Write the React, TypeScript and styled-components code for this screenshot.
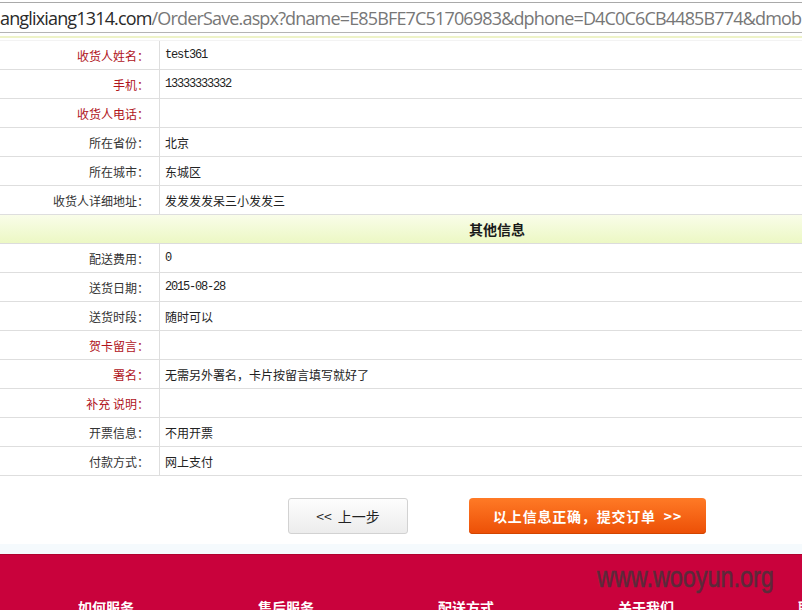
import React from "react";
import styled, { createGlobalStyle } from "styled-components";

const Global = createGlobalStyle`
  html, body { margin: 0; padding: 0; background: #fff; overflow: hidden; }
  body { font-family: "Noto Sans CJK SC", "Noto Sans", sans-serif; }
`;

const Screen = styled.div`
  width: 802px;
  height: 610px;
  overflow: hidden;
  position: relative;
`;

const AddressFrame = styled.div`
  height: 36px;
  box-sizing: border-box;
  border-bottom: 2px solid #eef3c8;
  background: #fff;
`;

const AddressBox = styled.div`
  margin-top: 2px;
  height: 31px;
  box-sizing: border-box;
  border-top: 1px solid #a9a9a9;
  border-bottom: 1px solid #b4b4b4;
  display: flex;
  align-items: center;
  white-space: nowrap;
  overflow: hidden;
  font-family: "Open Sans", "Noto Sans", sans-serif;
  font-size: 18px;
  letter-spacing: -0.84px;
  color: #777;
`;

const Host = styled.span`
  color: #2a2a2a;
`;

const Page = styled.div`
  width: 994px;
  padding-top: 2px;
`;

const Table = styled.div`
  display: grid;
  grid-template-columns: 160px 1fr;
  border-top: 1px solid #f3f3f3;
`;

const Label = styled.div<{ $red?: boolean }>`
  height: 29px;
  box-sizing: border-box;
  border-bottom: 1px solid #dedede;
  border-right: 1px solid #dedede;
  display: flex;
  align-items: center;
  justify-content: flex-end;
  padding-right: 10px;
  font-size: 12px;
  color: ${(p) => (p.$red ? "#b0141c" : "#333")};
`;

const Value = styled.div<{ $mono?: boolean }>`
  height: 29px;
  box-sizing: border-box;
  border-bottom: 1px solid #dedede;
  display: flex;
  align-items: center;
  padding-left: 5px;
  color: #222;
  font-size: 12px;
  font-family: ${(p) =>
    p.$mono
      ? `"Liberation Mono", "DejaVu Sans Mono", monospace`
      : `"Noto Sans CJK SC", sans-serif`};
  letter-spacing: ${(p) => (p.$mono ? "-1.2px" : "0")};
`;

const SectionHead = styled.div`
  grid-column: 1 / -1;
  height: 29px;
  box-sizing: border-box;
  border-bottom: 1px solid #dcdcdc;
  background: linear-gradient(#f9fde9, #ecf8c4);
  display: flex;
  align-items: center;
  justify-content: center;
  font-size: 14px;
  font-weight: 700;
  color: #1a1a1a;
`;

const Actions = styled.div`
  display: flex;
  justify-content: center;
  gap: 61px;
  padding: 22px 0 10px;
`;

const BackButton = styled.button`
  width: 120px;
  height: 36px;
  border: 1px solid #d2d2d2;
  border-radius: 3px;
  background: linear-gradient(#fdfdfd, #ececec);
  font-family: "Noto Sans CJK SC", sans-serif;
  font-size: 14px;
  color: #222;
  padding: 0;
  word-spacing: 3px;
`;

const SubmitButton = styled.button`
  width: 237px;
  height: 36px;
  border: none;
  border-radius: 4px;
  background: linear-gradient(#ff7a26, #ec4f06);
  box-shadow: inset 0 -1px 0 #d24500;
  font-family: "Noto Sans CJK SC", sans-serif;
  font-size: 14px;
  font-weight: 700;
  color: #fff;
  padding: 0;
  letter-spacing: 0.8px;
  word-spacing: 4px;
`;

const Tint = styled.div`
  height: 10px;
  background: #f5fafd;
`;

const Footer = styled.div`
  position: relative;
  height: 120px;
  background: #c9023c;
  border-top: 1px solid #b0022f;
  display: flex;
  padding: 42px 0 0 78px;
  box-sizing: border-box;
`;

const FooterLink = styled.div`
  width: 180px;
  flex: none;
  font-size: 14px;
  font-weight: 700;
  color: #fff;
`;

const Watermark = styled.div`
  position: absolute;
  left: 597px;
  top: 5px;
  font-family: "Liberation Sans", Arial, sans-serif;
  font-size: 30px;
  transform: scaleX(0.78);
  transform-origin: left top;
  color: rgb(92, 42, 58);
  -webkit-text-stroke: 0.6px rgb(92, 42, 58);
`;

type Row = { label: string; value?: string; red?: boolean; mono?: boolean };

const receiver: Row[] = [
  { label: "收货人姓名：", value: "test361", red: true, mono: true },
  { label: "手机：", value: "13333333332", red: true, mono: true },
  { label: "收货人电话：", value: "", red: true },
  { label: "所在省份：", value: "北京" },
  { label: "所在城市：", value: "东城区" },
  { label: "收货人详细地址：", value: "发发发发呆三小发发三" },
];

const other: Row[] = [
  { label: "配送费用：", value: "0", mono: true },
  { label: "送货日期：", value: "2015-08-28", mono: true },
  { label: "送货时段：", value: "随时可以" },
  { label: "贺卡留言：", value: "", red: true },
  { label: "署名：", value: "无需另外署名，卡片按留言填写就好了", red: true },
  { label: "补充 说明：", value: "", red: true },
  { label: "开票信息：", value: "不用开票" },
  { label: "付款方式：", value: "网上支付" },
];

const renderRows = (rows: Row[]) =>
  rows.map((r) => (
    <React.Fragment key={r.label}>
      <Label $red={r.red}>{r.label}</Label>
      <Value $mono={r.mono}>{r.value}</Value>
    </React.Fragment>
  ));

export default function App() {
  return (
    <Screen>
      <Global />
      <AddressFrame>
        <AddressBox>
          <Host>anglixiang1314.com</Host>
          /OrderSave.aspx?dname=E85BFE7C51706983&amp;dphone=D4C0C6CB4485B774&amp;dmob
        </AddressBox>
      </AddressFrame>
      <Page>
        <Table>
          {renderRows(receiver)}
          <SectionHead>其他信息</SectionHead>
          {renderRows(other)}
        </Table>
        <Actions>
          <BackButton>&lt;&lt; 上一步</BackButton>
          <SubmitButton>以上信息正确，提交订单 &gt;&gt;</SubmitButton>
        </Actions>
      </Page>
      <Tint />
      <Footer>
        <Watermark>www.wooyun.org</Watermark>
        <FooterLink>如何服务</FooterLink>
        <FooterLink>售后服务</FooterLink>
        <FooterLink>配送方式</FooterLink>
        <FooterLink>关于我们</FooterLink>
        <FooterLink>联系我们</FooterLink>
      </Footer>
    </Screen>
  );
}
